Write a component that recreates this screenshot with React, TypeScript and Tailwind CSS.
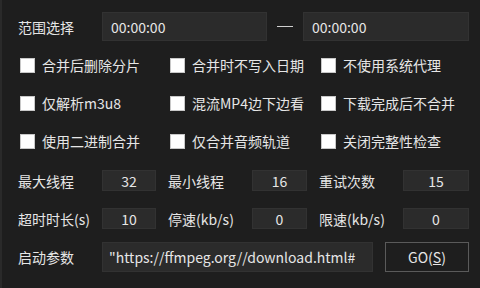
import React from 'react';

const FONT = "font-['Microsoft_YaHei','Noto_Sans_CJK_SC','Noto_Sans',sans-serif]";

const CHECKS: string[][] = [
  ['合并后删除分片', '合并时不写入日期', '不使用系统代理'],
  ['仅解析m3u8', '混流MP4边下边看', '下载完成后不合并'],
  ['使用二进制合并', '仅合并音频轨道', '关闭完整性检查'],
];

const Box: React.FC<{ className?: string; children?: React.ReactNode }> = ({ className = '', children }) => (
  <div className={`bg-[#2b2b2b] border border-[#323232] flex items-center ${className}`}>{children}</div>
);

const CheckItem: React.FC<{ label: string }> = ({ label }) => (
  <label className="flex items-center gap-[7px]">
    <span className="w-[15px] h-[15px] bg-white border border-[#c8c8c8] shrink-0" />
    <span>{label}</span>
  </label>
);

const NumField: React.FC<{ label: string; value: string; w: string }> = ({ label, value, w }) => (
  <>
    <span>{label}</span>
    <Box className={`${w} h-[21px] justify-center`}>{value}</Box>
  </>
);

export default function App() {
  return (
    <div
      className={`w-[480px] h-[288px] bg-[#1e1e1e] border-l-2 border-[#2a2a2a] text-[#e6e6e6] text-[14px] leading-none ${FONT}`}
    >
      {/* plage */}
      <div className="flex items-center pl-[16px] pt-[12px]">
        <span className="w-[84px]">范围选择</span>
        <Box className="w-[165px] h-[29px] pl-[8px]">00:00:00</Box>
        <div className="w-[36px] flex justify-center">
          <div className="w-[16px] h-px bg-[#d0d0d0]" />
        </div>
        <Box className="w-[166px] h-[29px] pl-[8px]">00:00:00</Box>
      </div>

      {/* options */}
      <div className="pl-[18px] mt-[5px]">
        {CHECKS.map((row, i) => (
          <div key={i} className="grid grid-cols-[150px_151px_1fr] items-center h-[38px]">
            {row.map((c) => (
              <CheckItem key={c} label={c} />
            ))}
          </div>
        ))}
      </div>

      {/* nombres */}
      <div className="pl-[16px] mt-[10px] grid grid-cols-[84px_54px_12px_84px_55px_12px_84px_66px] items-center">
        <NumField label="最大线程" value="32" w="w-[54px]" />
        <span />
        <NumField label="最小线程" value="16" w="w-[55px]" />
        <span />
        <NumField label="重试次数" value="15" w="w-[66px]" />
      </div>
      <div className="pl-[16px] mt-[17px] grid grid-cols-[84px_54px_12px_84px_55px_12px_84px_66px] items-center">
        <NumField label="超时时长(s)" value="10" w="w-[54px]" />
        <span />
        <NumField label="停速(kb/s)" value="0" w="w-[55px]" />
        <span />
        <NumField label="限速(kb/s)" value="0" w="w-[66px]" />
      </div>

      {/* lancement */}
      <div className="flex items-center pl-[16px] mt-[13px]">
        <span className="w-[84px]">启动参数</span>
        <Box className="w-[271px] h-[30px] pl-[6px] whitespace-nowrap overflow-hidden">
          "https://ffmpeg.org//download.html#
        </Box>
        <button className="ml-[12px] w-[84px] h-[30px] border border-[#5a5a5a] bg-[#1e1e1e] text-[#e6e6e6]">
          GO(<span className="underline">S</span>)
        </button>
      </div>
    </div>
  );
}
